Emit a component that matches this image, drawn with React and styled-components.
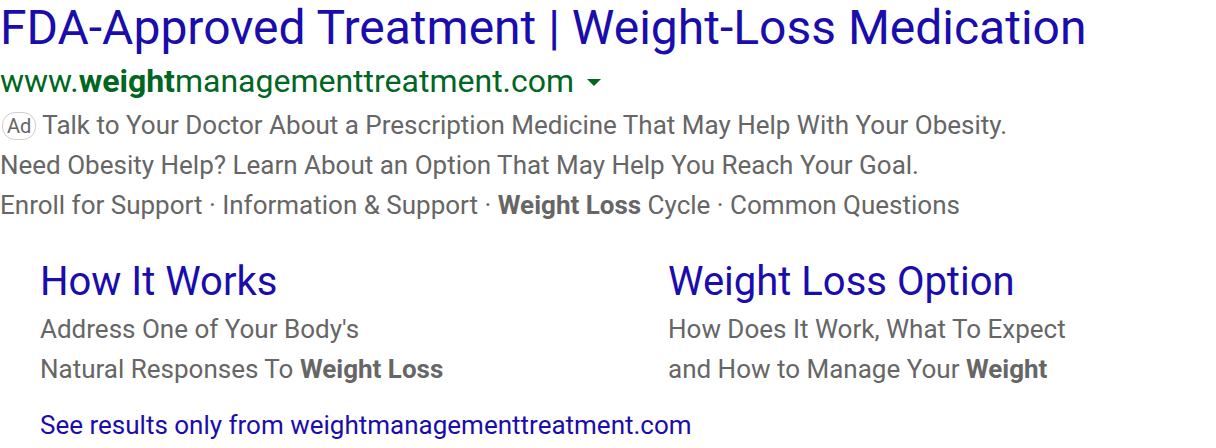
import React from 'react'
import styled, { createGlobalStyle } from 'styled-components'

const colors = {
  link: '#1a0dab',
  url: '#006621',
  text: '#666666',
  badge: '#cfcfcf',
}

const GlobalStyle = createGlobalStyle`
  body {
    margin: 0;
    background: #ffffff;
    font-family: Roboto, "Noto Sans", Arial, sans-serif;
  }
`

const Ad = styled.div`
  width: 1216px;
`

const Title = styled.a`
  display: block;
  font-size: 48px;
  line-height: 56px;
  color: ${colors.link};
  text-decoration: none;
  white-space: nowrap;
`

const UrlRow = styled.div`
  display: flex;
  align-items: center;
  gap: 13px;
  height: 49px;
  font-size: 32px;
  color: ${colors.url};
`

const Caret = styled.span`
  width: 0;
  height: 0;
  margin-top: 4px;
  border-left: 7px solid transparent;
  border-right: 7px solid transparent;
  border-top: 7px solid ${colors.url};
`

const Line = styled.div`
  font-size: 26px;
  line-height: 40px;
  color: ${colors.text};
  white-space: nowrap;
`

const Badge = styled.span`
  display: inline-block;
  height: 26px;
  line-height: 26px;
  padding: 0 4px;
  margin: 0 6px 0 2px;
  vertical-align: 1px;
  border: 1px solid ${colors.badge};
  border-radius: 13px;
  font-size: 20px;
  color: ${colors.text};
`

const Sitelinks = styled.div`
  display: grid;
  grid-template-columns: 628px 1fr;
  padding: 29px 0 0 40px;
`

const Sitelink = styled.div`
  display: flex;
  flex-direction: column;
`

const SiteTitle = styled.a`
  font-size: 40px;
  line-height: 55px;
  color: ${colors.link};
  text-decoration: none;
`

const Footer = styled.a`
  display: block;
  padding: 16px 0 0 40px;
  font-size: 26px;
  line-height: 40px;
  color: ${colors.link};
  text-decoration: none;
`

const sitelinks = [
  {
    title: 'How It Works',
    lines: [
      <>Address One of Your Body's</>,
      <>Natural Responses To <b>Weight Loss</b></>,
    ],
  },
  {
    title: 'Weight Loss Option',
    lines: [
      <>How Does It Work, What To Expect</>,
      <>and How to Manage Your <b>Weight</b></>,
    ],
  },
]

export default function App() {
  return (
    <>
      <GlobalStyle />
      <Ad>
        <Title href="#">FDA-Approved Treatment | Weight-Loss Medication</Title>
        <UrlRow>
          <span>www.<b>weight</b>managementtreatment.com</span>
          <Caret />
        </UrlRow>
        <Line>
          <Badge>Ad</Badge>Talk to Your Doctor About a Prescription Medicine That May Help With Your Obesity.
        </Line>
        <Line>Need Obesity Help? Learn About an Option That May Help You Reach Your Goal.</Line>
        <Line>
          Enroll for Support · Information &amp; Support · <b>Weight Loss</b> Cycle · Common Questions
        </Line>
        <Sitelinks>
          {sitelinks.map((s) => (
            <Sitelink key={s.title}>
              <SiteTitle href="#">{s.title}</SiteTitle>
              {s.lines.map((l, i) => (
                <Line key={i}>{l}</Line>
              ))}
            </Sitelink>
          ))}
        </Sitelinks>
        <Footer href="#">See results only from weightmanagementtreatment.com</Footer>
      </Ad>
    </>
  )
}
